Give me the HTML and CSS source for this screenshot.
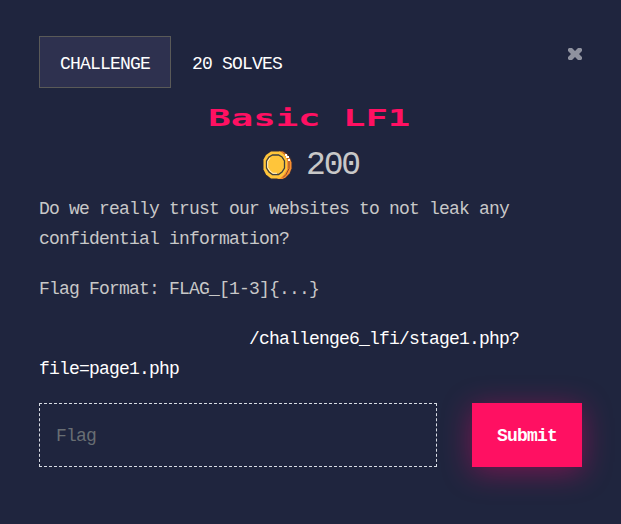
FILE: index.html
```html
<!DOCTYPE html>
<html lang="en">
<head>
<meta charset="utf-8">
<title>Basic LF1</title>
<link rel="stylesheet" href="styles.css">
</head>
<body>
<main class="modal">
  <header class="top">
    <nav class="tabs">
      <button class="tab active">CHALLENGE</button>
      <button class="tab">20 SOLVES</button>
    </nav>
    <button class="close" aria-label="Close">
      <svg width="16" height="14" viewBox="0 0 16 14"><path d="M2 1h3l3 3 3-3h3l1 1v2l-3 3 3 3v2l-1 1h-3L8 10l-3 3H2l-1-1v-2l3-3-3-3V2z"/></svg>
    </button>
  </header>
  <h1 class="title"><span>Basic LF1</span></h1>
  <div class="score">
    <svg class="coin" width="32" height="30" viewBox="0 0 32 30">
      <path fill="#302b39" d="M9 .5h13l4 3 3 4 1.500 4v7l-2 5-4 4-3 2H9l-5-4-3-6v-9l3-6z"/>
      <path fill="#f98e2f" d="M17 1.500h4l4 3 3 4 1.500 4v6l-2 5-4 4-3 1.500h-5z"/>
      <path fill="none" stroke="#8d4c2b" d="M21 2.500l3 3 3 5v8l-3 6-3 3"/>
      <path fill="#fff" d="M23 4h2v2h2v2h-3V6h-1zM26 9h2v2h-2z"/>
      <path fill="#ffc53a" d="M9 1.500h9l4 3 3 5v10l-3 5-4 4H9l-5-4-2.500-5v-10L4 5z"/>
      <path fill="#ffc53a" stroke="#3f4040" stroke-width="1.300" d="M10.500 5h6l3.500 2 2.500 4v7l-2.500 4-3.500 2.500h-6L7 22l-2.500-4v-7L7 7z"/>
      <path fill="none" stroke="#fff3cc" d="M8 8l-2.300 3.500v6L8 21l3 2.300h4"/>
    </svg>
    <span class="points">200</span>
  </div>
  <section class="description">
    <p>Do we really trust our websites to not leak any confidential information?</p>
    <p>Flag Format: FLAG_[1-3]{...}</p>
    <p class="link"><a>/challenge6_lfi/stage1.php?<br>file=page1.php</a></p>
  </section>
  <form class="answer">
    <input class="flag" type="text" placeholder="Flag" aria-label="Flag">
    <button class="submit" type="button">Submit</button>
  </form>
</main>
</body>
</html>
```
FILE: styles.css
```css
* {
  box-sizing: border-box;
}

body {
  margin: 0;
  background: #1f253e;
  color: #c8c8c8;
  font: 18px/30px "Liberation Mono", monospace;
  letter-spacing: -0.8px;
}

button,
input {
  font: inherit;
  letter-spacing: inherit;
  border-radius: 0;
}

.modal {
  height: 524px;
  overflow: hidden;
  padding: 36px 39px 0;
}

.top {
  display: flex;
  justify-content: space-between;
}

.tabs {
  display: flex;
}

.tab {
  height: 52px;
  padding: 4px 20px 0;
  border: 1px solid transparent;
  background: transparent;
  color: #fff;
}

.tab.active {
  width: 132px;
  border-color: #5a5a58;
  background: #2e314f;
}

.close {
  display: flex;
  height: 14px;
  margin: 11px -1px 0 0;
  padding: 0;
  border: 0;
  background: none;
}

.close path {
  fill: #8f929f;
}

.title {
  height: 40px;
  margin: 10px 0 0;
  color: #ff1062;
  font: bold 23px/40px "DejaVu Sans Mono", monospace;
  letter-spacing: 0;
  text-align: center;
}

.title span {
  display: inline-block;
  transform: translateX(-1px) scaleX(1.62);
}

.score {
  display: flex;
  justify-content: center;
  align-items: center;
  gap: 12px;
  height: 56px;
}

.coin {
  margin-top: -2px;
}

.points {
  font-size: 33px;
  letter-spacing: -2.2px;
}

.description p {
  margin: 0 0 20px;
}

.description .link {
  margin: 0;
  color: #fff;
}

.link a {
  display: block;
  text-indent: 210px;
  white-space: nowrap;
}

.answer {
  display: flex;
  justify-content: space-between;
  margin-top: 19px;
}

.flag {
  width: 398px;
  height: 64px;
  padding: 2px 16px 0;
  border: 1px dashed #d8dce4;
  background: transparent;
  color: #fff;
}

.flag::placeholder {
  color: #686e73;
  opacity: 1;
}

.submit {
  width: 110px;
  height: 64px;
  padding: 2px 0 0;
  border: 0;
  background: #ff1062;
  box-shadow: 0 5px 30px rgba(255, 0, 110, 0.4);
  color: #fff;
  font-weight: bold;
}
```
